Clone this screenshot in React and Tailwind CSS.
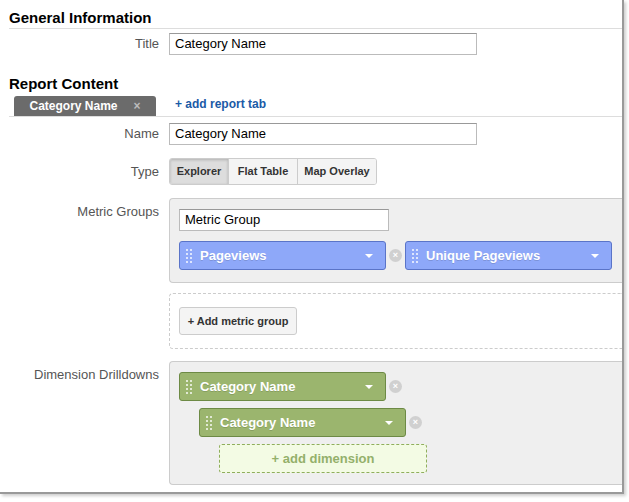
const font = { fontFamily: '"Liberation Sans", Arial, sans-serif' };

const Grip = () => (
  <span className="grid grid-cols-2 gap-x-[2px] gap-y-[2px] mr-2">
    {Array.from({ length: 8 }).map((_, i) => (
      <span key={i} className="block w-[2px] h-[2px] bg-white/70" />
    ))}
  </span>
);

const Remove = () => (
  <span className="w-[13px] h-[13px] rounded-full bg-[#d0d0d0] flex items-center justify-center text-white text-[9px] font-bold leading-none shrink-0">
    ×
  </span>
);

const Pill = ({ label, color }) => (
  <div
    className={`w-[207px] h-[29px] rounded-[3px] border flex items-center pl-[6px] pr-3 text-white font-bold text-[13px] ${color}`}
  >
    <Grip />
    <span className="flex-1 [text-shadow:0_1px_0_rgba(0,0,0,0.15)]">{label}</span>
    <span className="w-0 h-0 border-l-[4px] border-r-[4px] border-t-[4px] border-l-transparent border-r-transparent border-t-white" />
  </div>
);

const Label = ({ children, className = "" }) => (
  <div className={`w-[169px] shrink-0 text-right pr-[10px] text-[13px] text-[#555] ${className}`}>{children}</div>
);

const Input = ({ value, w = "w-[308px]" }) => (
  <div className={`${w} h-[22px] border border-[#bbb] border-t-[#999] bg-white px-[5px] flex items-center text-[13px] text-black`}>{value}</div>
);

export default function App() {
  const blue = "bg-[#8ea8f9] border-[#5a74c8]";
  const green = "bg-[#9bb56e] border-[#6d8a45]";
  return (
    <div style={font} className="w-[629px] h-[502px] bg-white">
      <div className="w-[624px] h-[494px] border-r-2 border-b-2 border-[#999] overflow-hidden bg-white shadow-[2px_2px_3px_rgba(0,0,0,0.2)]">
        <div className="pl-[9px] pt-[7px]">
          <h2 className="text-[15px] font-bold text-black h-[21px]">General Information</h2>
          <div className="border-t border-[#ddd]" />
        </div>
        <div className="flex items-center mt-[4px]">
          <Label>Title</Label>
          <Input value="Category Name" />
        </div>
        <div className="pl-[9px] mt-[18px]">
          <h2 className="text-[15px] font-bold text-black h-[23px]">Report Content</h2>
          <div className="flex items-end h-[20px] pl-[5px]">
            <div className="w-[142px] h-[20px] bg-[#6b6b6b] rounded-t-[3px] flex items-center justify-center gap-4 text-white text-[12px] font-bold">
              <span>Category Name</span>
              <span className="text-[#bbb]">×</span>
            </div>
            <span className="ml-[19px] mb-[3px] text-[12px] font-bold text-[#1a5aa6]">+ add report tab</span>
          </div>
          <div className="border-t border-[#ddd]" />
        </div>
        <div className="flex items-center mt-[6px]">
          <Label>Name</Label>
          <Input value="Category Name" />
        </div>
        <div className="flex mt-[13px]">
          <Label className="pt-[4px]">Type</Label>
          <div className="flex h-[27px] border border-[#ccc] rounded-[3px] text-[11px] font-bold text-[#333] overflow-hidden">
            <div className="w-[58px] flex items-center justify-center bg-[#ddd] shadow-[inset_0_1px_3px_rgba(0,0,0,0.2)]">Explorer</div>
            <div className="w-[69px] flex items-center justify-center bg-[#f4f4f4] border-l border-[#ccc]">Flat Table</div>
            <div className="w-[79px] flex items-center justify-center bg-[#f4f4f4] border-l border-[#ccc]">Map Overlay</div>
          </div>
        </div>
        <div className="flex mt-[13px]">
          <Label className="pt-[4px]">Metric Groups</Label>
          <div className="flex-1 min-w-0">
            <div className="h-[85px] bg-[#efefef] border border-[#ccc] border-r-0 rounded-l-[4px] pl-[9px] pt-[10px]">
              <Input value="Metric Group" w="w-[210px]" />
              <div className="flex items-center mt-[10px] whitespace-nowrap">
                <Pill label="Pageviews" color={blue} />
                <span className="mx-[3px]"><Remove /></span>
                <Pill label="Unique Pageviews" color={blue} />
              </div>
            </div>
            <div className="h-[56px] mt-[10px] border border-dashed border-[#ccc] border-r-0 rounded-l-[4px] pl-[9px] flex items-center">
              <div className="w-[118px] h-[28px] border border-[#ccc] rounded-[3px] bg-[#f4f4f4] flex items-center justify-center text-[11px] font-bold text-[#333]">+ Add metric group</div>
            </div>
          </div>
        </div>
        <div className="flex mt-[12px]">
          <Label className="pt-[4px]">Dimension Drilldowns</Label>
          <div className="flex-1 min-w-0 h-[124px] bg-[#efefef] border border-[#ccc] border-r-0 rounded-l-[4px] pl-[9px] pt-[10px] flex flex-col gap-[7px]">
            <div className="flex items-center gap-[3px]">
              <Pill label="Category Name" color={green} /><Remove />
            </div>
            <div className="flex items-center gap-[3px] pl-[20px]">
              <Pill label="Category Name" color={green} /><Remove />
            </div>
            <div className="ml-[40px] w-[208px] h-[29px] border border-dashed border-[#8fae5c] rounded-[3px] bg-[#f3fbe4] flex items-center justify-center text-[13px] font-bold text-[#94b06b]">+ add dimension</div>
          </div>
        </div>
      </div>
    </div>
  );
}
